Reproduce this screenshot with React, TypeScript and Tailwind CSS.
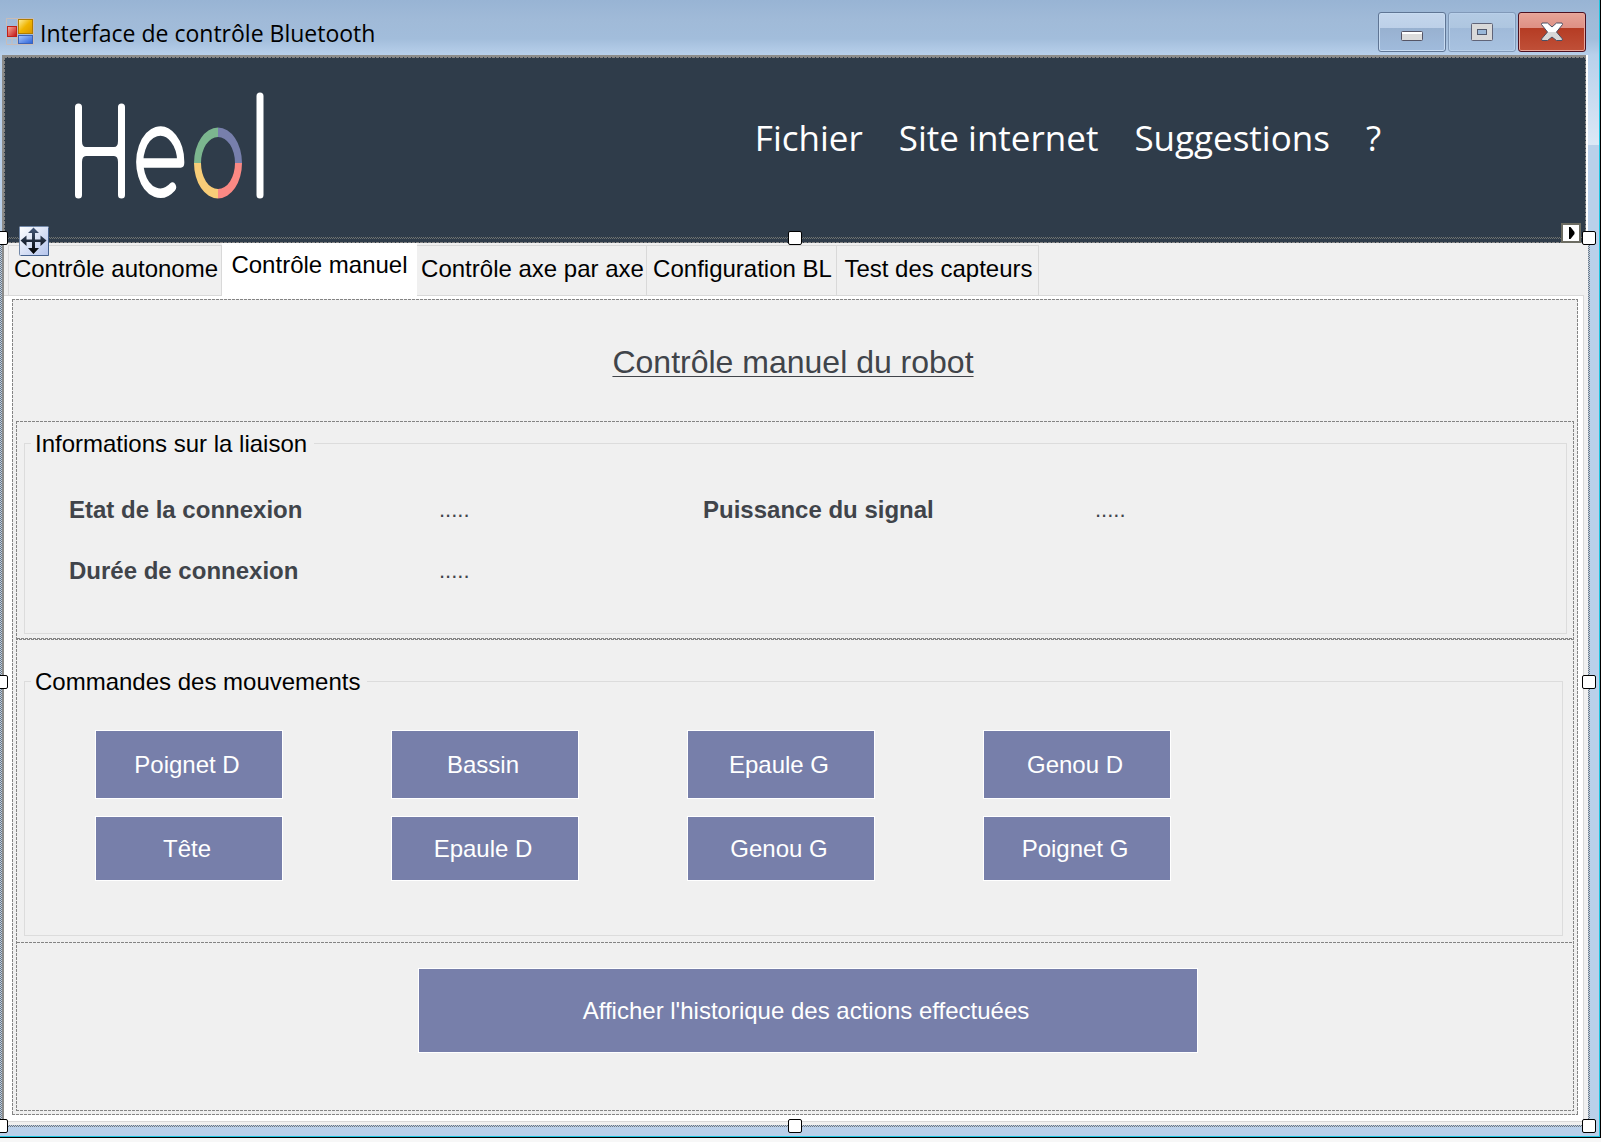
import type { ReactNode } from "react";

const dashedBox =
  "bg-no-repeat [background-image:repeating-linear-gradient(90deg,#848484_0_3px,transparent_3px_4px),repeating-linear-gradient(90deg,#848484_0_3px,transparent_3px_4px),repeating-linear-gradient(180deg,#848484_0_3px,transparent_3px_4px),repeating-linear-gradient(180deg,#848484_0_3px,transparent_3px_4px)] [background-size:100%_1px,100%_1px,1px_100%,1px_100%] [background-position:top,bottom,left,right]";

const dashedLine =
  "h-px bg-[repeating-linear-gradient(90deg,#848484_0_3px,transparent_3px_4px)]";

const hatch =
  "absolute bg-[repeating-conic-gradient(#66788c_0_25%,#c3cdd8_0_50%)] bg-[length:2px_2px]";

const captionButton =
  "flex h-10 w-[68px] items-center justify-center rounded-[3px] border";

const tabs = [
  { label: "Contrôle autonome", width: "w-[214px]" },
  { label: "Contrôle manuel", width: "w-[195px]" },
  { label: "Contrôle axe par axe", width: "w-[230px]" },
  { label: "Configuration BL", width: "w-[190px]" },
  { label: "Test des capteurs", width: "w-[202px]" },
];

const menu = ["Fichier", "Site internet", "Suggestions", "?"];

const movements = [
  "Poignet D",
  "Bassin",
  "Epaule G",
  "Genou D",
  "Tête",
  "Epaule D",
  "Genou G",
  "Poignet G",
];

function FormIcon() {
  return (
    <svg width="28" height="28" viewBox="0 0 28 28" aria-hidden="true">
      <defs>
        <linearGradient id="fy" x1="0" y1="0" x2="1" y2="1">
          <stop offset="0" stopColor="#fdf0a0" />
          <stop offset=".5" stopColor="#f0b400" />
          <stop offset="1" stopColor="#d89400" />
        </linearGradient>
        <linearGradient id="fr" x1="0" y1="0" x2="1" y2="1">
          <stop offset="0" stopColor="#f8b0a0" />
          <stop offset="1" stopColor="#c01010" />
        </linearGradient>
        <linearGradient id="fb" x1="0" y1="0" x2="1" y2="1">
          <stop offset="0" stopColor="#a8c8ff" />
          <stop offset="1" stopColor="#2860d8" />
        </linearGradient>
      </defs>
      <path d="M.5 8V.5h11V19M.5 19v7.5h11V19M6 19v7M.5 20.500h11M12 .5h15.500v26H12" fill="none" stroke="#c8bcb8" />
      <rect x="1.500" y="8.500" width="9" height="10" fill="url(#fr)" stroke="#c02018" />
      <rect x="12.500" y="1.500" width="14" height="14" fill="url(#fy)" stroke="#b07c00" />
      <rect x="12.500" y="17.500" width="14" height="8" fill="url(#fb)" stroke="#3c64b8" />
    </svg>
  );
}

function Logo() {
  return (
    <svg width="194" height="110" viewBox="72 90 194 110" role="img" aria-label="Heol">
      <g fill="none" stroke="#fff" strokeLinecap="round" strokeLinejoin="round">
        <path d="M78.500 107V195M121.500 107V195M260 96V195" strokeWidth="7" />
        <path d="M79 151.500H121" strokeWidth="9" strokeLinecap="butt" />
        <g transform="translate(160.500 163) scale(.75 1)" strokeWidth="9.500">
          <path d="M-27 0H27A27.300 31 0 1 0 16 24" />
        </g>
      </g>
      <path
        fill="#fff"
        d="M82 141q0 6 4 6h-5zM118 141q0 6-4 6h5zM82 162q0-6 4-6h-5zM118 162q0-6-4-6h5z"
      />
      <path fill="#7cb68f" d="M218 127.500A24 35.500 0 0 0 194 163H201A17 26 0 0 1 218 137z" />
      <path fill="#777fac" d="M218 127.500A24 35.500 0 0 1 242 163H235A17 26 0 0 0 218 137z" />
      <path fill="#fb8984" d="M218 198.500A24 35.500 0 0 0 242 163H235A17 26 0 0 1 218 189z" />
      <path fill="#f8cd78" d="M218 198.500A24 35.500 0 0 1 194 163H201A17 26 0 0 0 218 189z" />
    </svg>
  );
}

function MoveGrip() {
  return (
    <svg
      className="absolute left-[19px] top-[-17px]"
      width="30"
      height="30"
      viewBox="0 0 30 30"
      aria-hidden="true"
    >
      <defs>
        <linearGradient id="mg" x1="0" y1="0" x2="1" y2="1">
          <stop offset="0" stopColor="#fff" />
          <stop offset="1" stopColor="#b4c4ec" />
        </linearGradient>
        <linearGradient id="ma" x1="0" y1="0" x2="0" y2="1">
          <stop offset="0" stopColor="#44587a" />
          <stop offset="1" stopColor="#000" />
        </linearGradient>
      </defs>
      <rect x=".5" y=".5" width="29" height="29" rx="1" fill="url(#mg)" stroke="#7288a8" />
      <path d="M29.500 2V29.500H2" fill="none" stroke="#44608c" />
      <path
        fill="url(#ma)"
        d="M14.500 1.500 20 7H16V13.500H21.500V9.500L27.500 14.500 21.500 20V16H16V22H20L14.500 28 9 22H13V16H7.500V20L1.500 14.500 7.500 9.500V13.500H13V7H9z"
      />
    </svg>
  );
}

function SmartTag() {
  return (
    <button
      type="button"
      aria-label="Tâches"
      className="absolute right-[9px] top-[-20px] flex h-5 w-5 items-center justify-center border-2 border-[#6c6c62] bg-white"
    >
      <svg width="7" height="12" viewBox="0 0 7 12" aria-hidden="true">
        <path d="M1 0h1.500L6.500 5v2L2.500 12H1z" />
      </svg>
    </button>
  );
}

function Handle({ place }: { place: string }) {
  return <span className={`absolute h-3.5 w-3.5 rounded-[2px] border border-black bg-white ${place}`} />;
}

/* Designer selection frame drawn over the edges of the table layout. */
function Selection() {
  return (
    <div className="pointer-events-none absolute inset-x-0 -top-1.5 bottom-0">
      <div className="absolute left-2 right-2 top-0 h-0.5 bg-[repeating-conic-gradient(#6f7370_0_25%,#2f3b49_0_50%)] bg-[length:2px_2px]" />
      <div className={`${hatch} inset-y-0 left-0 w-0.5`} />
      <div className={`${hatch} inset-y-0 right-0 w-0.5`} />
      <div className={`${hatch} inset-x-0 bottom-0 h-0.5`} />
      <Handle place="-left-1.5 -top-1.5" />
      <Handle place="left-1/2 -ml-[7px] -top-1.5" />
      <Handle place="-right-1.5 -top-1.5" />
      <Handle place="-left-1.5 top-1/2 -mt-[7px]" />
      <Handle place="-right-1.5 top-1/2 -mt-[7px]" />
      <Handle place="-left-1.5 -bottom-1.5" />
      <Handle place="left-1/2 -ml-[7px] -bottom-1.5" />
      <Handle place="-right-1.5 -bottom-1.5" />
    </div>
  );
}

function TitleBar() {
  return (
    <header className="flex h-[55px] items-start bg-[linear-gradient(#98b4d4,#a0bad8_35%,#a2bddb_70%,#b8d0eb)] pl-1.5 pr-[13px]">
      <div className="flex items-start gap-1.5 pt-[18px]">
        <FormIcon />
        <h1 className="font-['Open_Sans',sans-serif] text-[23px] leading-[30px] text-black">
          Interface de contrôle Bluetooth
        </h1>
      </div>
      <div className="ml-auto flex gap-0.5 pt-3">
        <button
          type="button"
          aria-label="Réduire"
          className={`${captionButton} border-[#5f7594] bg-[linear-gradient(#c4d6ec,#bdd0e8_40%,#98b1d0_40%,#a0bbdc)] shadow-[inset_0_0_0_1px_#c8dcf2]`}
        >
          <svg className="mt-2" width="22" height="10" viewBox="0 0 22 10" aria-hidden="true">
            <rect x=".5" y=".5" width="21" height="9" rx="1" fill="#dcdcdc" stroke="#555566" />
            <path d="M1 2h20" stroke="#fff" strokeWidth="2" />
          </svg>
        </button>
        <button
          type="button"
          aria-label="Agrandir"
          className={`${captionButton} border-[#8199b8] bg-[linear-gradient(#b4cbe4,#aec6e0_40%,#a0bad9_40%,#a8c2e0)] shadow-[inset_0_0_0_1px_#b8d0ea]`}
        >
          <svg width="22" height="18" viewBox="0 0 22 18" aria-hidden="true">
            <rect x=".5" y=".5" width="21" height="17" rx="1" fill="#d9d9d9" stroke="#606478" />
            <rect x="6.500" y="6.500" width="9" height="5" fill="#9ab8d8" stroke="#50586c" />
          </svg>
        </button>
        <button
          type="button"
          aria-label="Fermer"
          className={`${captionButton} border-[#4c1020] bg-[linear-gradient(#e6a498,#de9084_40%,#b53c24_40%,#c05038)] shadow-[inset_0_0_0_1px_#e8a89c]`}
        >
          <svg width="24" height="20" viewBox="0 0 24 20" aria-hidden="true">
            <defs>
              <linearGradient id="cx" x1="0" y1="0" x2="0" y2="1">
                <stop offset=".5" stopColor="#fff" />
                <stop offset=".5" stopColor="#d8d8d8" />
              </linearGradient>
            </defs>
            <path
              d="M2 1h5.500L12 5l4.500-4H22l.5 1.500L16.500 10l6 7-.5 1.500h-5.500L12 15l-4.500 3.500H2L1.500 17l6-7-6-7.500z"
              fill="url(#cx)"
              stroke="#4c5064"
            />
          </svg>
        </button>
      </div>
    </header>
  );
}

function Group({ title, className, children }: { title: string; className: string; children: ReactNode }) {
  return (
    <fieldset className={`border border-[#dcdcdc] ${className}`}>
      <legend className="ml-1.5 pl-1 pr-[7px] pt-0.5 leading-7">{title}</legend>
      {children}
    </fieldset>
  );
}

function ActionButton({ children }: { children: ReactNode }) {
  return (
    <button type="button" className="h-full w-full border border-white bg-[#777faa] pr-1 text-white">
      {children}
    </button>
  );
}

export default function App() {
  return (
    <div className="flex min-h-screen flex-col overflow-hidden bg-[#f7f7f7] pb-1 font-['Liberation_Sans',Arial,sans-serif] text-2xl text-black">
      <div className="flex grow flex-col border-b border-r border-black">
        <div className="flex grow flex-col border-b border-r border-[#1cc4e0] bg-[#bad0ea]">
          <TitleBar />

          <div className="flex">
            <div className="w-0.5 shrink-0 bg-[#bad0ea]" />
            <div className="flex grow border-l-2 border-t-2 border-[#8c8c8a]">
              <div className={`flex h-[186px] grow items-start bg-[#2f3c4a] ${dashedBox}`}>
                <div className="pl-[68px] pt-[33px]">
                  <Logo />
                </div>
                <nav className="ml-auto pr-[205px] pt-[57px]">
                  <ul className="flex gap-9 font-['Open_Sans',sans-serif] text-[35px] leading-[48px] text-white">
                    {menu.map((item) => (
                      <li key={item}>
                        <a href="#">{item}</a>
                      </li>
                    ))}
                  </ul>
                </nav>
              </div>
            </div>
            <div className="w-0.5 shrink-0 bg-white" />
            <div className="h-[90px] w-[11px] shrink-0 bg-[linear-gradient(#b8d0eb,#dce8f6)]" />
          </div>

          <div className="relative mr-[9px] flex grow flex-col pb-0.5 pl-0.5 pr-0.5">
            <div className="flex grow flex-col border-l-2 border-[#8c8c8a] bg-[#f0f0f0] pb-[3px] pr-1">
              <div role="tablist" className="flex h-[53px] pl-1 shadow-[inset_0_-1px_0_#d9d9d9]">
                {tabs.map((tab, i) => (
                  <button
                    key={tab.label}
                    type="button"
                    role="tab"
                    aria-selected={i === 1}
                    className={
                      i === 1
                        ? `${tab.width} bg-white pb-2.5 whitespace-nowrap`
                        : `${tab.width} mt-0.5 border border-[#d9d9d9] pb-1 pl-0.5 whitespace-nowrap ${i === 0 ? "" : "border-l-0"}`
                    }
                  >
                    {tab.label}
                  </button>
                ))}
              </div>

              <main className="flex grow flex-col border-b border-r border-[#d9d9d9] bg-white pb-1.5 pl-2 pr-[5px] pt-[3px]">
                <div className={`flex grow flex-col bg-[#f0f0f0] p-1 ${dashedBox}`}>
                  <h2 className="pb-10 pt-10 pr-1 text-center text-[32px] leading-[38px] text-[#40444a] underline decoration-1 underline-offset-3">
                    Contrôle manuel du robot
                  </h2>

                  <div className={`flex grow flex-col p-px ${dashedBox}`}>
                    <section className="pb-1 pl-[7px] pr-1.5 pt-1.5">
                      <Group title="Informations sur la liaison" className="min-h-[206px]">
                        <dl className="grid grid-cols-[370fr_264fr_392fr_471fr] gap-y-[31px] pl-11 pt-[37px] leading-[30px] text-[#40444a]">
                          <dt className="font-bold">Etat de la connexion</dt>
                          <dd className="text-[22px]">.....</dd>
                          <dt className="font-bold">Puissance du signal</dt>
                          <dd className="text-[22px]">.....</dd>
                          <dt className="font-bold">Durée de connexion</dt>
                          <dd className="text-[22px]">.....</dd>
                        </dl>
                      </Group>
                    </section>
                    <div className={dashedLine} />
                    <div className={`${dashedLine} bg-[position:2px_0]`} />

                    <section className="pb-1.5 pl-[7px] pr-2.5 pt-[26px]">
                      <Group title="Commandes des mouvements" className="min-h-[270px]">
                        <div className="grid grid-cols-[repeat(4,188px)] grid-rows-[69px_65px] gap-x-[108px] gap-y-[17px] pl-[70px] pt-[34px]">
                          {movements.map((m) => (
                            <ActionButton key={m}>{m}</ActionButton>
                          ))}
                        </div>
                      </Group>
                    </section>
                    <div className={dashedLine} />

                    <section className="grow pl-[401px] pr-[375px] pt-[25px]">
                      <div className="h-[85px]">
                        <ActionButton>Afficher l'historique des actions effectuées</ActionButton>
                      </div>
                    </section>
                  </div>
                </div>
              </main>
            </div>
            <Selection />
            <MoveGrip />
            <SmartTag />
          </div>
          <div className="h-[9px] shrink-0" />
        </div>
      </div>
    </div>
  );
}
